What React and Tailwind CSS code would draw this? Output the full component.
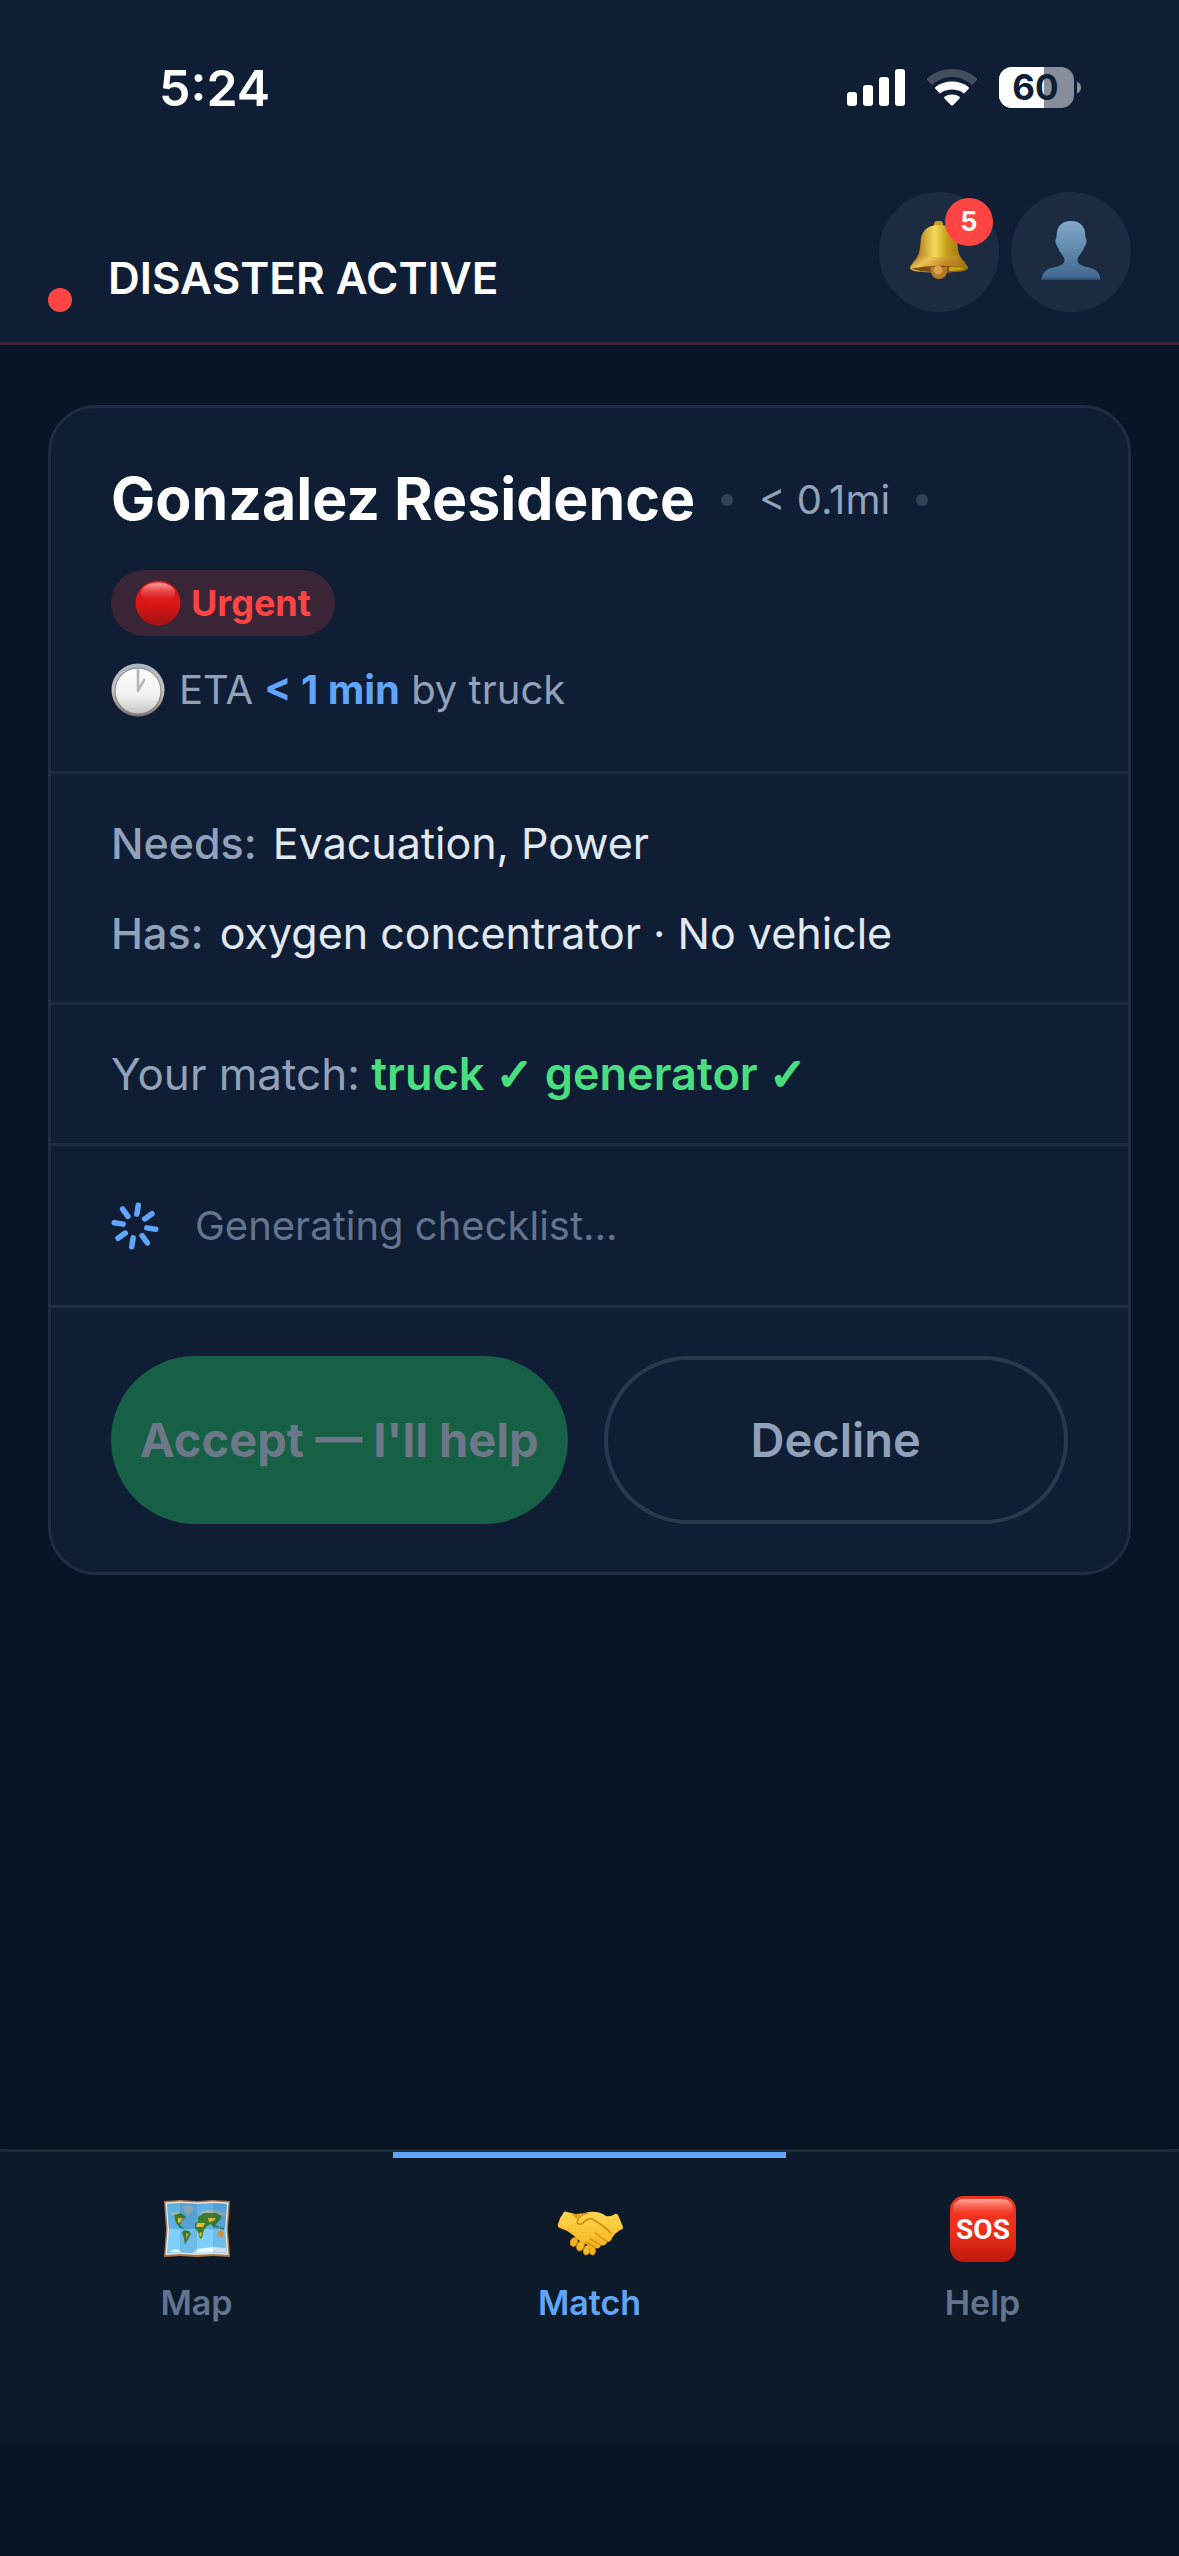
import React, { useState } from 'react';
import clsx from 'clsx';

const SignalIcon = () => (
  <svg viewBox="0 0 58 38" className="h-[38px] w-[58px]" fill="#fff" aria-hidden="true">
    <rect x="0" y="23" width="10" height="14" rx="3" />
    <rect x="16" y="16" width="10" height="21" rx="3" />
    <rect x="32" y="8" width="10" height="29" rx="3" />
    <rect x="48" y="0" width="10" height="37" rx="3" />
  </svg>
);

const WifiIcon = () => (
  <svg viewBox="0 0 52 38" className="h-[38px] w-[52px]" aria-hidden="true">
    <path d="M1.5 11.5Q0 10 1.500 9Q12 0 26 0T50.500 9Q52 10 50.500 11.500L46 16Q37 8 26 8T6 16Z" fill="#444e5f" />
    <path d="M9.500 20Q8.500 19 9.500 18Q16.500 12.500 26 12.500T42.500 18Q43.500 19 42.500 20L38 24.500Q33 20.500 26 20.500T14 24.500Z" fill="#fff" />
    <path d="M18.500 29.500Q17.500 28.500 18.500 27.800Q21.500 25.500 26 25.500T33.500 27.800Q34.500 28.500 33.500 29.500L27 36.300Q26 37.200 25 36.300Z" fill="#fff" />
  </svg>
);

const BatteryIcon = () => (
  <svg viewBox="0 0 83 42" className="h-[42px] w-[83px]" role="img" aria-label="Battery 60%">
    <clipPath id="battery-body">
      <rect width="75" height="41" rx="13" />
    </clipPath>
    <g clipPath="url(#battery-body)">
      <rect width="75" height="41" fill="#888e99" />
      <rect width="45" height="41" fill="#fff" />
    </g>
    <path d="M78 14.500Q82 16.500 82 20.500T78 26.500Z" fill="#888e99" />
    <text x="36.500" y="33" textAnchor="middle" fontSize="35" fontWeight="700" fontFamily="Inter, sans-serif" fill="#0f1e35">60</text>
  </svg>
);

const BellIcon = () => (
  <svg viewBox="0 0 60 60" className="h-[60px] w-[60px]" aria-hidden="true">
    <defs>
      <linearGradient id="bell-body" x1="0" x2="1">
        <stop offset="0" stopColor="#8a5a12" />
        <stop offset=".2" stopColor="#c99a2c" />
        <stop offset=".42" stopColor="#f4dc58" />
        <stop offset=".65" stopColor="#c79d1c" />
        <stop offset="1" stopColor="#8c6410" />
      </linearGradient>
      <linearGradient id="bell-rim" x1="0" x2="1" y1="0" y2=".4">
        <stop offset="0" stopColor="#9a6718" />
        <stop offset=".35" stopColor="#edc453" />
        <stop offset=".65" stopColor="#c98f2b" />
        <stop offset="1" stopColor="#a07811" />
      </linearGradient>
    </defs>
    <rect x="25" y="1" width="9" height="8" rx="3" fill="#c79a25" />
    <path d="M30 5C17 5 12 12 11.500 23C11 33 9 37 3 43H57C50 37 49 33 48.500 23C48 12 43 5 30 5Z" fill="url(#bell-body)" />
    <path d="M11 35C22 38 38 38 49 35C51 40 59 44 59 48C59 51 50 52.500 30 52.500S1 51 1 48C1 44 9 40 11 35Z" fill="url(#bell-rim)" />
    <path d="M2 48.500Q30 43 58 48.500Q50 52 30 52T2 48.500Z" fill="#7a4d0c" />
    <path d="M40 47Q51 46.500 56 48.500Q50 51 40 51Z" fill="#c8a80c" />
    <path d="M21.500 47H38.500Q38.500 59 30 59T21.500 47Z" fill="#b57a26" />
    <circle cx="29" cy="50" r="4.500" fill="#dda24c" />
  </svg>
);

const PersonIcon = () => (
  <svg viewBox="0 0 60 60" className="h-[60px] w-[60px]" aria-hidden="true">
    <linearGradient id="person-fill" x1="0" x2="0" y1="0" y2="1">
      <stop offset="0" stopColor="#80a9cb" />
      <stop offset="1" stopColor="#42668f" />
    </linearGradient>
    <path d="M30 1C20 1 15.500 7 15.500 17C15.500 19 14 19 14.500 22C15 26 16.500 25.500 17 28C18.500 33 23.500 36 23.500 40C23.500 45 18 46 12 47.500C5 49 1 53 .5 59.500H59.500C59 53 55 49 48 47.500C42 46 36.500 45 36.500 40C36.500 36 41.500 33 43 28C43.500 25.500 45 26 45.500 22C46 19 44.500 19 44.500 17C44.500 7 40 1 30 1Z" fill="url(#person-fill)" />
    <path d="M1 58.500H59" stroke="#345880" strokeWidth="2" />
  </svg>
);

const RedCircleIcon = () => (
  <svg viewBox="0 0 46 46" className="h-[46px] w-[46px]" aria-hidden="true">
    <linearGradient id="red-fill" x1="0" x2="0" y1="0" y2="1">
      <stop offset="0" stopColor="#d81414" />
      <stop offset=".5" stopColor="#dc1717" />
      <stop offset="1" stopColor="#a01212" />
    </linearGradient>
    <linearGradient id="red-gloss" x1="0" x2="0" y1="0" y2="1">
      <stop offset="0" stopColor="#ffa5a5" />
      <stop offset="1" stopColor="#e32020" stopOpacity="0" />
    </linearGradient>
    <circle cx="23" cy="23" r="22.500" fill="url(#red-fill)" />
    <ellipse cx="23" cy="13" rx="17" ry="10.500" fill="url(#red-gloss)" />
  </svg>
);

const ClockIcon = () => (
  <svg viewBox="0 0 54 54" className="h-[54px] w-[54px]" aria-hidden="true">
    <defs>
      <linearGradient id="clock-rim" x1="0" x2="0" y1="0" y2="1">
        <stop offset="0" stopColor="#a9b6c8" />
        <stop offset=".5" stopColor="#c9c6c2" />
        <stop offset="1" stopColor="#77736f" />
      </linearGradient>
      <linearGradient id="clock-face" x1="0" x2="0" y1="0" y2="1">
        <stop offset="0" stopColor="#fdfdfd" />
        <stop offset=".6" stopColor="#f1f1f1" />
        <stop offset="1" stopColor="#c4c4c4" />
      </linearGradient>
    </defs>
    <circle cx="27" cy="27" r="26.500" fill="url(#clock-rim)" />
    <circle cx="27" cy="28" r="23" fill="url(#clock-face)" stroke="#85827f" strokeWidth="1" />
    <path d="M27 7V28L33 17" fill="none" stroke="#b3b6b9" strokeWidth="2.600" strokeLinecap="round" strokeLinejoin="round" />
  </svg>
);

const Spinner = () => (
  <svg viewBox="-24 -24 48 48" className="h-12 w-12" stroke="#60a5fa" strokeWidth="5.500" strokeLinecap="round" aria-hidden="true">
    {[9, 54, 99, 144, 189, 234, 279, 324].map(angle => (
      <path key={angle} d="M0 -12V-21" transform={`rotate(${angle})`} />
    ))}
  </svg>
);

const MapIcon = () => (
  <svg viewBox="0 0 66 66" className="h-[66px] w-[66px]" aria-hidden="true">
    <path d="M0 5L16 4L33 5L49 4L66 5L64 33L66 61L49 60L33 61L16 60L0 61L2 33Z" fill="#a9754f" />
    <path d="M1.500 6.500L16 5.500L33 6.500L49 5.500L64.500 6.500L62.500 33L64.500 59L49 58L33 59L16 58L1.500 59L3.500 33Z" fill="#efe2d4" />
    <path d="M3 8L16 7L33 8L49 7L63 8L61 33L63 57.500L49 56.500L33 57.500L16 56.500L3 57.500L5 33Z" fill="#7ed0fa" />
    <path d="M3 8L16 7L33 8L49 7L63 8L61 33H5Z" fill="#5eb1e4" />
    <path d="M18 11L24 9L30 11L28 16L24 20L20 15ZM6 17L12 15L18 17L14 20L8 19ZM34 17L42 14L52 14L62 17L60 20L46 19Z" fill="#9db4bd" />
    <path d="M10 19L17 17L22 21L18 25L16 29L20 33L16 32L12 27L11 23ZM20 34L25 35L27 38L24 43L21 49L20 42L18 37ZM34 21L40 17L52 17L58 20L55 25L52 28L50 32L47 28L43 30L40 34L38 42L36 43L34 36L31 32L31 27L34 26Z" fill="#3f7d2a" />
    <path d="M14 22L19 22L17 26L14 27ZM33 27L41 27L39 31L32 31ZM44 22L52 22L50 25L45 26ZM36 36L38 37L37 41L35 39ZM22 37L25 38L22 43Z" fill="#e2b83c" />
    <path d="M53 37L57 34L60 37L59 41L54 40Z" fill="#f39a26" />
    <path d="M51 30L55 31M56 32L60 33" stroke="#2c7b46" strokeWidth="1.500" />
    <path d="M5 56L12 53L18 56ZM28 57L34 53L48 51L62 52L62.500 57L49 56L33 57Z" fill="#f0f7fb" />
    <path d="M16 7L33 8V57.500L16 56.500ZM49 7L63 8L61 33L63 57.500L49 56.500Z" fill="#124f86" opacity=".15" />
  </svg>
);

const HandshakeIcon = () => (
  <svg viewBox="0 0 66 66" className="h-[66px] w-[66px]" aria-hidden="true">
    <linearGradient id="hand-fill" x1="0" x2="0" y1="0" y2="1">
      <stop offset="0" stopColor="#ffd64f" />
      <stop offset="1" stopColor="#f5b41f" />
    </linearGradient>
    <g stroke="#d28a0c" strokeWidth="1">
      <ellipse cx="17" cy="46" rx="3.500" ry="4.500" transform="rotate(25 17 46)" fill="#f3b523" />
      <ellipse cx="23.500" cy="50" rx="3.500" ry="5" transform="rotate(25 23.500 50)" fill="#f8bf2d" />
      <ellipse cx="30" cy="54" rx="3.300" ry="5" transform="rotate(20 30 54)" fill="#f8bf2d" />
      <ellipse cx="35.500" cy="55" rx="3" ry="4" fill="#f3b523" />
    </g>
    <path d="M7 16Q8 15 10 16L18 18Q26 18 32 16Q42 15 49 20Q54 21 58 18Q60 17 61.500 20L66 31Q66 34 63 34Q58 37 55 42Q54 46 50 46Q49 50 44 49.500Q42 53.500 38 52Q34 54 31 49L24 46Q19 42 16 39Q10 34 3 32Q0 31 1 28Q3 21 7 16Z" fill="url(#hand-fill)" />
    <path d="M31 17Q23 18 20 26Q21 30 26 27Q30 22 35 23Q45 28 54 37" fill="none" stroke="#d08a0e" strokeWidth="1.500" strokeLinecap="round" />
    <path d="M38 37L50 45.500M33 43L44 49M29 46L38 51.500" fill="none" stroke="#d99514" strokeWidth="1.500" strokeLinecap="round" />
    <path d="M13 16Q17 19 24 18L20 23Q17 21 13 16Z" fill="#dc9b17" />
  </svg>
);

const SosIcon = () => (
  <svg viewBox="0 0 66 66" className="h-[66px] w-[66px]" aria-hidden="true">
    <defs>
      <linearGradient id="sos-fill" x1="0" x2="0" y1="0" y2="1">
        <stop offset="0" stopColor="#f03420" />
        <stop offset=".5" stopColor="#f0301c" />
        <stop offset="1" stopColor="#bd190c" />
      </linearGradient>
      <linearGradient id="sos-gloss" x1="0" x2="0" y1="0" y2="1">
        <stop offset="0" stopColor="#ffab9f" />
        <stop offset="1" stopColor="#ff3a26" stopOpacity="0" />
      </linearGradient>
    </defs>
    <rect width="66" height="66" rx="14" fill="url(#sos-fill)" />
    <rect x="3" y="3" width="60" height="19" rx="10" fill="url(#sos-gloss)" />
    <text x="33" y="43" textAnchor="middle" fontSize="28" fontWeight="700" fontFamily="Roboto, sans-serif" fill="#fff">SOS</text>
  </svg>
);

const tabs = [
  { id: 'map', label: 'Map', Icon: MapIcon },
  { id: 'match', label: 'Match', Icon: HandshakeIcon },
  { id: 'help', label: 'Help', Icon: SosIcon }
];

const resources = ['truck', 'generator'];

const StatusBar = () => (
  <div className="flex h-44 items-center justify-between pl-[159px] pr-[97px] text-white">
    <span className="text-[50px] font-semibold">5:24</span>
    <div className="flex items-center gap-[21px]">
      <SignalIcon />
      <WifiIcon />
      <BatteryIcon />
    </div>
  </div>
);

const Header = () => (
  <header className="border-b-[3px] border-[#3a2536] bg-[#0f1e35]">
    <StatusBar />
    <div className="flex items-end justify-between px-12 pb-[30px] pt-4">
      <div className="flex items-end gap-9">
        <span className="h-6 w-6 rounded-full bg-[#ff4444]" />
        <h1 className="text-[44px] leading-[68px] font-semibold text-white">DISASTER ACTIVE</h1>
      </div>
      <div className="flex gap-3">
        <button type="button" aria-label="Notifications" className="relative flex h-30 w-30 items-center justify-center rounded-full bg-[#1d2b41] pb-1">
          <BellIcon />
          <span className="absolute right-1.5 top-1.5 flex h-12 w-12 items-center justify-center rounded-full bg-[#ff4444] text-[27px] font-bold text-white">5</span>
        </button>
        <button type="button" aria-label="Profile" className="flex h-30 w-30 items-center justify-center rounded-full bg-[#1d2b41] pb-1">
          <PersonIcon />
        </button>
      </div>
    </div>
  </header>
);

const Dot = () => <span className="h-3 w-3 rounded-full bg-[#334155]" />;

const MatchCard = ({ onDecline }) => (
  <article className="divide-y-[3px] divide-[#1f2c43] rounded-[48px] border-[3px] border-[#1f2c43] bg-[#0f1e35]">
    <div className="px-15 pb-[51px] pt-12">
      <div className="flex h-[87px] items-center gap-[26px]">
        <h2 className="text-[59px] font-bold text-white">Gonzalez Residence</h2>
        <Dot />
        <span className="text-[40px] text-slate-400">&lt; 0.1mi</span>
        <Dot />
      </div>
      <div className="mt-[27px] flex">
        <span className="flex h-[66px] items-center gap-2.5 rounded-full bg-[#3a2536] px-6 text-[36px] font-bold text-[#ff4444]">
          <RedCircleIcon />
          Urgent
        </span>
      </div>
      <div className="mt-6 flex h-15 items-center gap-3.5 text-[40px] text-slate-400">
        <ClockIcon />
        <p>ETA <strong className="font-bold text-[#60a5fa]">&lt; 1 min</strong> by truck</p>
      </div>
    </div>

    <dl className="flex flex-col gap-6 px-15 py-9 text-[43px] leading-[66px]">
      <div className="flex gap-4">
        <dt className="font-medium text-slate-400">Needs:</dt>
        <dd className="text-slate-200">Evacuation, Power</dd>
      </div>
      <div className="flex gap-4">
        <dt className="font-medium text-slate-400">Has:</dt>
        <dd className="text-slate-200">oxygen concentrator · No vehicle</dd>
      </div>
    </dl>

    <p className="px-15 py-9 text-[44px] leading-[66px] text-slate-400">
      Your match:
      {resources.map(name => (
        <span key={name} className="text-[45px] font-semibold text-[#4ade80]">
          {' '}{name} <span className="font-['DejaVu_Sans'] leading-none font-bold italic [-webkit-text-stroke:2px_#4ade80]">✓</span>
        </span>
      ))}
    </p>

    <div className="flex items-center gap-9 px-15 py-12" role="status">
      <Spinner />
      <span className="text-[40px] leading-[63px] text-slate-500">Generating checklist…</span>
    </div>

    <div className="flex gap-9 px-15 py-12">
      <button type="button" disabled className="h-42 flex-1 rounded-full bg-[#176046] text-[47px] font-bold whitespace-nowrap text-[#6c7888]">
        Accept — I'll help
      </button>
      <button type="button" onClick={onDecline} className="h-42 flex-1 rounded-full border-4 border-[#2b384c] text-[47px] font-semibold text-slate-400">
        Decline
      </button>
    </div>
  </article>
);

const TabBar = ({ active, onSelect }) => (
  <nav className="flex border-t-[3px] border-[#1c2a39] bg-[#0c1a29] pb-[118px] shadow-[0_-12px_48px_rgba(0,0,0,0.2)]">
    {tabs.map(({ id, label, Icon }) => (
      <a
        key={id}
        href={`#${id}`}
        onClick={() => onSelect(id)}
        className={clsx(
          'flex flex-1 flex-col items-center gap-5 border-t-[6px] pt-[38px] text-[34px] leading-[42px] font-semibold',
          active === id ? 'border-[#60a5fa] text-[#60a5fa]' : 'border-transparent text-slate-500'
        )}
      >
        <Icon />
        {label}
      </a>
    ))}
  </nav>
);

const App = () => {
  const [active, setActive] = useState('match');
  const [declined, setDeclined] = useState(false);

  return (
    <div className="flex min-h-screen flex-col bg-[#091526] pb-[114px] font-['Inter','DejaVu_Sans',sans-serif]">
      <Header />
      <main className="flex-1 px-12 py-15">
        {!declined && <MatchCard onDecline={() => setDeclined(true)} />}
      </main>
      <TabBar active={active} onSelect={setActive} />
    </div>
  );
};

export default App;
